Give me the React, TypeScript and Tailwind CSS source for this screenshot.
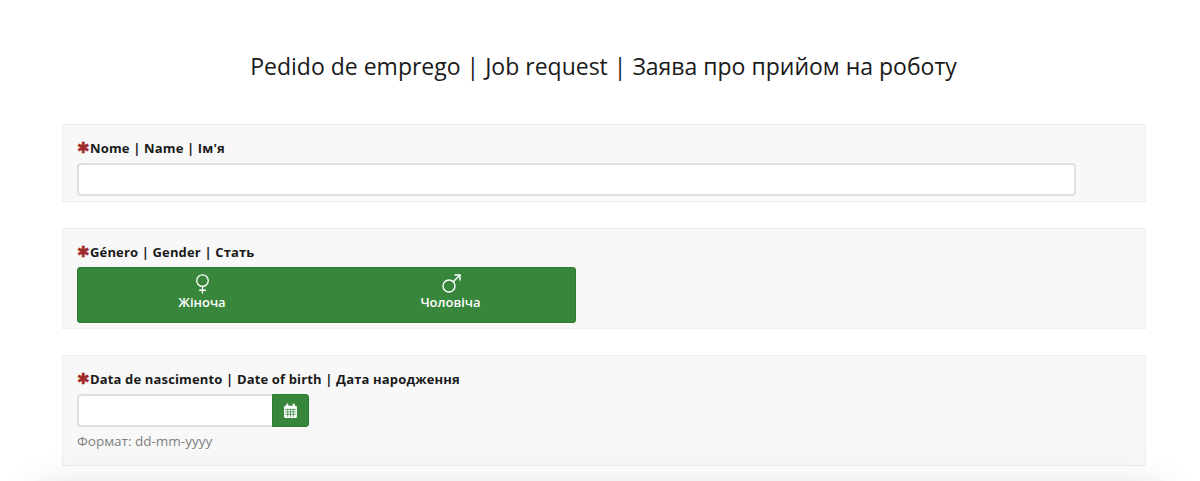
import React from "react";
import { Mars, Venus } from "lucide-react";

function Label({ children }: { children: React.ReactNode }) {
  return (
    <label className="flex items-center h-[20px] text-[13px] leading-[20px] font-bold tracking-[0.15px] text-[#1a1a1a]">
      <span className="w-[13px] text-[#a12a2a] text-[15px] font-bold font-['DejaVu_Sans',sans-serif] [-webkit-text-stroke:0.5px_#a12a2a]">✱</span>
      {children}
    </label>
  );
}

function CalendarIcon() {
  return (
    <svg width="15" height="16" viewBox="0 0 14 15">
      <path d="M1 3.5a1 1 0 0 1 1-1h1V1.5a1 1 0 0 1 2 0v1h4V1.5a1 1 0 0 1 2 0v1h1a1 1 0 0 1 1 1V13a1 1 0 0 1-1 1H2a1 1 0 0 1-1-1z" fill="#fff" />
      <path d="M2 6h10M2 8.3h10M2 10.6h10M4.4 5.5V13M7 5.5V13M9.6 5.5V13" stroke="#38863c" strokeWidth="0.7" />
    </svg>
  );
}

export default function App() {
  return (
    <div className="relative h-[481px] overflow-hidden bg-white font-['Open_Sans',sans-serif]">
      <h1 className="pt-[50px] pl-[7px] text-center text-[23px] leading-[32px] font-normal text-[#1a1a1a]">
        Pedido de emprego | Job request | Заява про прийом на роботу
      </h1>

      <div className="ml-[62px] mt-[42px] flex w-[1084px] flex-col gap-[26px]">
        {/* nome */}
        <section className="h-[78px] border border-[#eeeeee] bg-[#f8f8f8] px-[14px] pt-[13px]">
          <Label>Nome | Name | Ім'я</Label>
          <input className="mt-[5px] block h-[33px] w-[999px] rounded-[4px] border-2 border-[#e0e0e0] bg-white" />
        </section>

        {/* genero */}
        <section className="h-[101px] border border-[#eeeeee] bg-[#f8f8f8] px-[14px] pt-[13px]">
          <Label>Género | Gender | Стать</Label>
          <div className="mt-[5px] flex h-[56px] w-[499px] rounded-[3px] border border-[#2a7d2e] bg-[#38863c] text-white">
            <div className="flex w-[248px] flex-col items-center pt-[4px]">
              <Venus size={23} strokeWidth={1.4} className="-mb-[3px]" />
              <span className="text-[13px] leading-[20px] font-semibold">Жіноча</span>
            </div>
            <div className="flex w-[249px] flex-col items-center pt-[4px]">
              <Mars size={24} strokeWidth={1.4} className="-mb-[4px]" />
              <span className="text-[13px] leading-[20px] font-semibold">Чоловіча</span>
            </div>
          </div>
        </section>

        {/* data de nascimento */}
        <section className="h-[111px] border border-[#eeeeee] bg-[#f8f8f8] px-[14px] pt-[13px]">
          <Label>Data de nascimento | Date of birth | Дата народження</Label>
          <div className="mt-[5px] flex h-[33px]">
            <input className="block h-[33px] w-[195px] rounded-l-[4px] border-2 border-r-0 border-[#e0e0e0] bg-white" />
            <button className="flex h-[33px] w-[37px] items-center justify-center rounded-r-[3px] border border-[#2a7d2e] bg-[#38863c] text-white">
              <CalendarIcon />
            </button>
          </div>
          <p className="mt-[4px] text-[13.5px] leading-[20px] text-[#808080]">Формат: dd-mm-yyyy</p>
        </section>
      </div>

      {/* тень от нижней панели */}
      <div className="absolute top-[490px] left-[40px] right-[40px] h-[40px] shadow-[0_0_40px_rgba(0,0,0,0.16)]" />
    </div>
  );
}
